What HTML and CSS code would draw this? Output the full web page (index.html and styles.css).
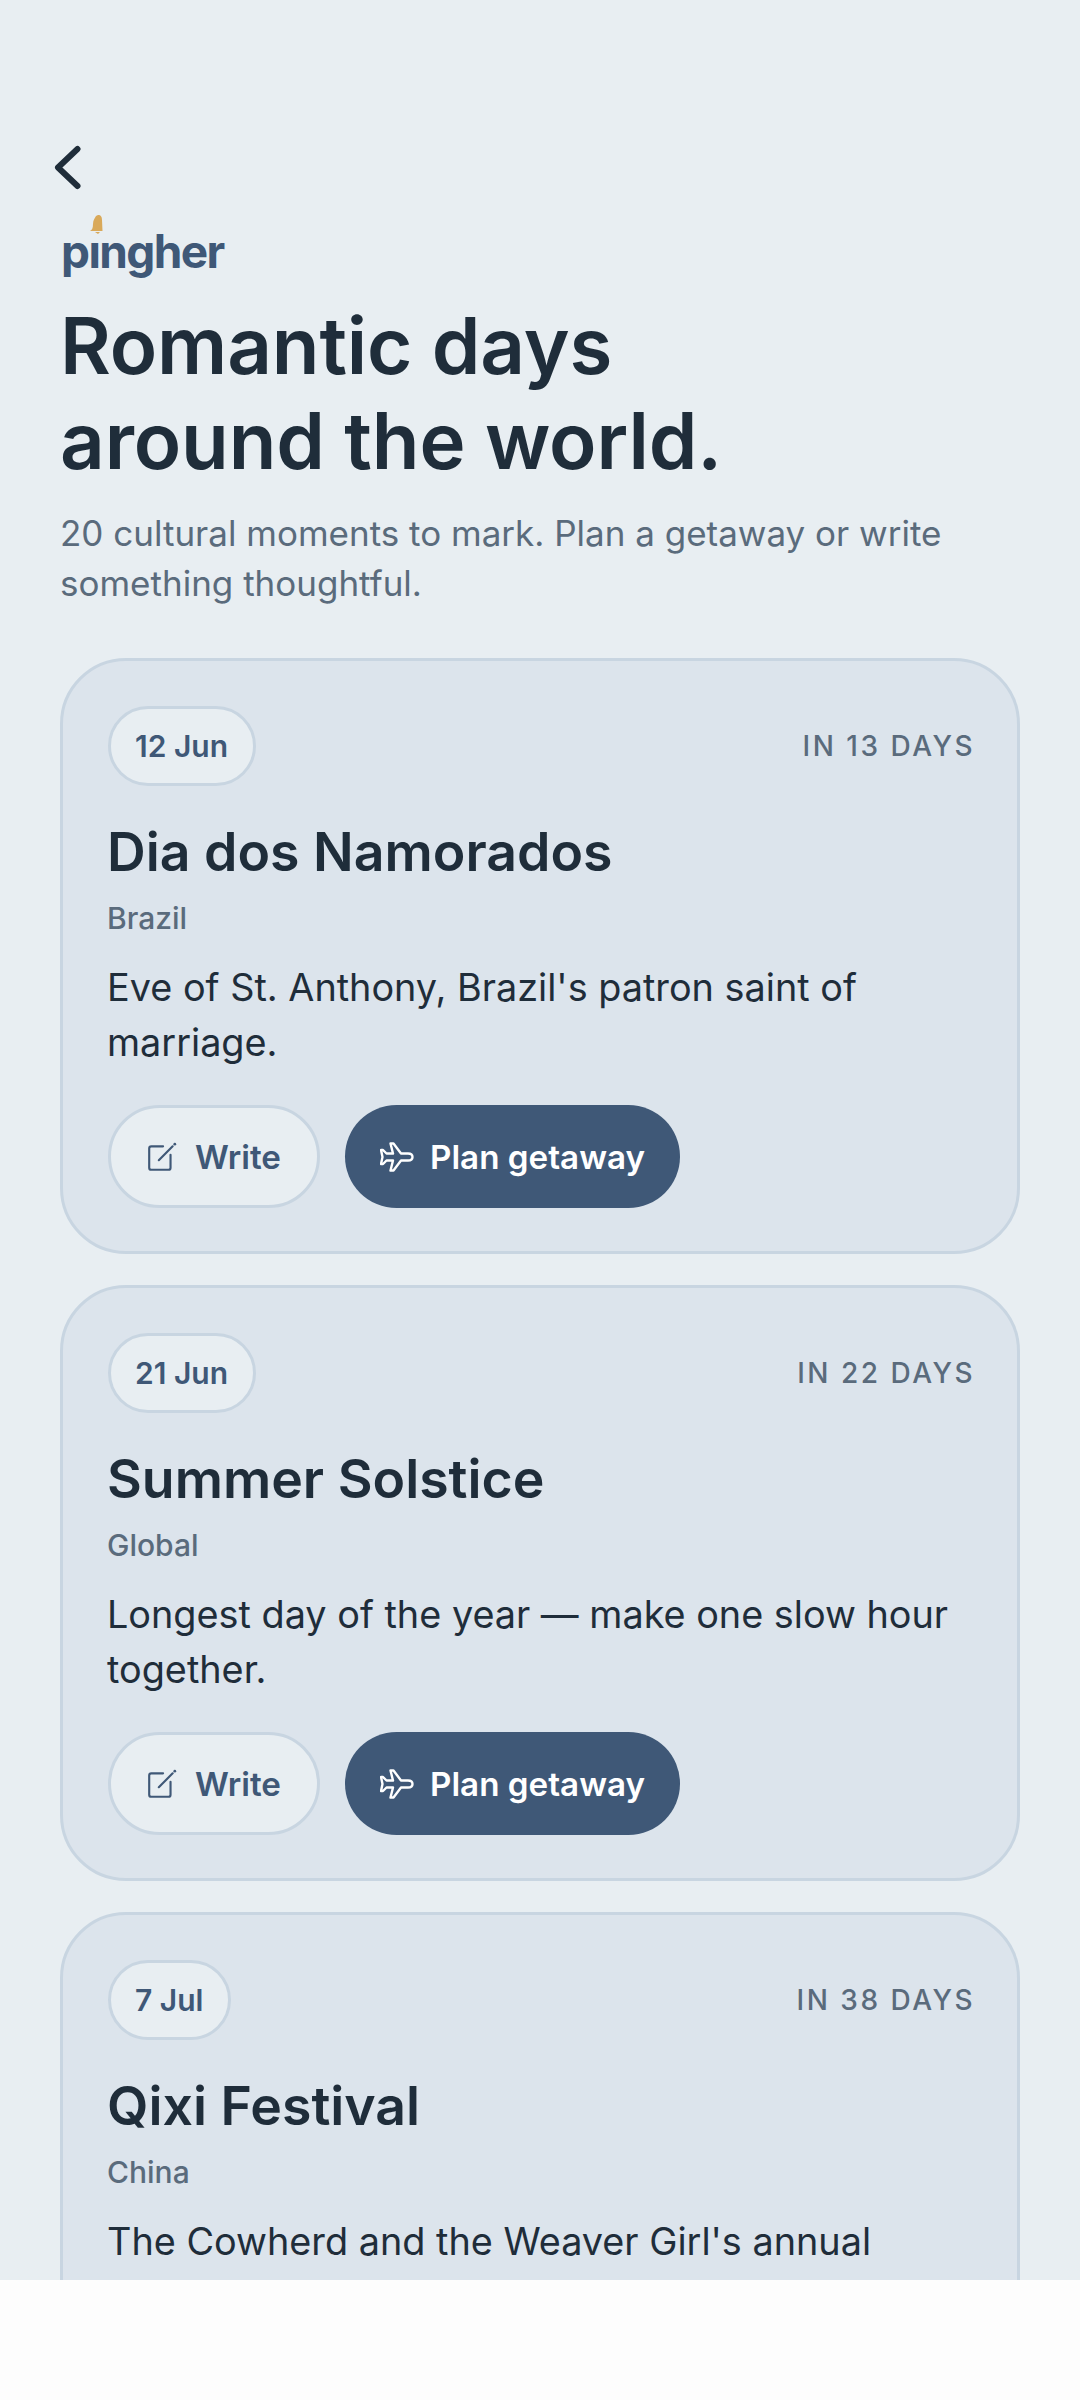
FILE: index.html
```html
<!DOCTYPE html>
<html lang="en">
    <head>
        <meta charset="utf-8">
        <title>Romantic days around the world</title>
        <link rel="stylesheet" href="styles.css">
    </head>
    <body>
        <div class="screen">
            <a class="back">
                <svg width="30" height="46" viewBox="0 0 30 46"><path d="M24.500 5 L5 23.500 L24.500 42" fill="none" stroke="#1f2d3a" stroke-width="6" stroke-linecap="round" stroke-linejoin="round"/></svg>
            </a>
            <div class="logo">
                <span class="logo-text">pingher</span>
                <span class="logo-mask"></span>
                <svg class="logo-bell" width="14" height="20" viewBox="0 0 14 20"><path d="M8 0 C11 0 12 2 12 5 L12.500 16 L0 16 C2 15 3 13 3 9 C3 5 5 3 6 1 Z M5 17 H10 L8 19 Z" fill="#d9a95a"/></svg>
            </div>
            <h1 class="title">Romantic days<br>around the world.</h1>
            <p class="subtitle">20 cultural moments to mark. Plan a getaway or write something thoughtful.</p>

            <div class="card">
                <div class="card-top">
                    <span class="pill">12 Jun</span>
                    <span class="days">IN 13 DAYS</span>
                </div>
                <h2 class="name">Dia dos Namorados</h2>
                <div class="country">Brazil</div>
                <p class="desc">Eve of St. Anthony, Brazil's patron saint of marriage.</p>
                <div class="actions">
                    <a class="btn btn-write">
                        <svg width="30" height="32" viewBox="0 0 28 30"><path d="M15 5 H4 Q2 5 2 7 V25 Q2 27 4 27 H20 Q22 27 22 25 V13 M11 18 L24 5" fill="none" stroke="#3f5877" stroke-width="2" stroke-linecap="round"/><circle cx="26" cy="3" r="1.300" fill="#3f5877"/></svg>
                        Write
                    </a>
                    <a class="btn btn-plan">
                        <svg width="34" height="30" viewBox="0 0 34 30"><path d="M32.500 15 Q32.500 11.500 28 11.500 H21 L13.500 1.500 H10.500 L13 11.500 H6.500 L3 8 H1 L2.500 15 L1 22 H3 L6.500 18.500 H13 L10.500 28.500 H13.500 L21 18.500 H28 Q32.500 18.500 32.500 15 Z" fill="none" stroke="#fff" stroke-width="2.400" stroke-linejoin="round"/></svg>
                        Plan getaway
                    </a>
                </div>
            </div>

            <div class="card">
                <div class="card-top">
                    <span class="pill">21 Jun</span>
                    <span class="days">IN 22 DAYS</span>
                </div>
                <h2 class="name">Summer Solstice</h2>
                <div class="country">Global</div>
                <p class="desc">Longest day of the year — make one slow hour together.</p>
                <div class="actions">
                    <a class="btn btn-write">
                        <svg width="30" height="32" viewBox="0 0 28 30"><path d="M15 5 H4 Q2 5 2 7 V25 Q2 27 4 27 H20 Q22 27 22 25 V13 M11 18 L24 5" fill="none" stroke="#3f5877" stroke-width="2" stroke-linecap="round"/><circle cx="26" cy="3" r="1.300" fill="#3f5877"/></svg>
                        Write
                    </a>
                    <a class="btn btn-plan">
                        <svg width="34" height="30" viewBox="0 0 34 30"><path d="M32.500 15 Q32.500 11.500 28 11.500 H21 L13.500 1.500 H10.500 L13 11.500 H6.500 L3 8 H1 L2.500 15 L1 22 H3 L6.500 18.500 H13 L10.500 28.500 H13.500 L21 18.500 H28 Q32.500 18.500 32.500 15 Z" fill="none" stroke="#fff" stroke-width="2.400" stroke-linejoin="round"/></svg>
                        Plan getaway
                    </a>
                </div>
            </div>

            <div class="card">
                <div class="card-top">
                    <span class="pill">7 Jul</span>
                    <span class="days">IN 38 DAYS</span>
                </div>
                <h2 class="name">Qixi Festival</h2>
                <div class="country">China</div>
                <p class="desc">The Cowherd and the Weaver Girl's annual</p>
            </div>
        </div>
    </body>
</html>
```

FILE: styles.css
```css
* {
    box-sizing: border-box;
}

html, body {
    margin: 0;
    background-color: #fdfdfd;
}

body {
    font-family: Inter, "Noto Sans", sans-serif;
    color: #1f2d3a;
}

.screen {
    height: 2280px;
    overflow: hidden;
    background-color: #e8eef2;
    padding: 144px 60px 0;
}

.back {
    display: block;
    height: 46px;
    margin-left: -7px;
}

.logo {
    position: relative;
    height: 78px;
    margin-top: 22px;
    padding-left: 1px;
}

.logo-text {
    display: block;
    font-weight: 700;
    font-size: 46px;
    line-height: 78px;
    color: #3f5877;
    letter-spacing: -1.600px;
}

/* hides the dot of the i, the bell sits there instead */
.logo-mask {
    position: absolute;
    left: 21px;
    top: 12px;
    width: 20px;
    height: 17px;
    background-color: #e8eef2;
}

.logo-bell {
    position: absolute;
    left: 30px;
    top: 3px;
}

.title {
    margin: 8px 0 0;
    font-size: 78px;
    line-height: 95px;
    font-weight: 600;
    letter-spacing: -0.150px;
}

.subtitle {
    margin: 20px 0 50px;
    font-size: 35px;
    line-height: 50px;
    color: #5a6b7c;
}

.card {
    height: 596px;
    margin-top: 31px;
    padding: 45px 42px 0 44px;
    background-color: #dce4ec;
    border: 3px solid #c8d5e1;
    border-radius: 66px;
}

.card-top {
    display: flex;
    justify-content: space-between;
    align-items: center;
    padding-left: 1px;
}

.pill {
    height: 80px;
    padding: 0 25px 0 24px;
    display: flex;
    align-items: center;
    background-color: #e8eef2;
    border: 3px solid #c8d5e1;
    border-radius: 40px;
    font-size: 30px;
    font-weight: 600;
    color: #3f5877;
}

.days {
    font-size: 28px;
    letter-spacing: 2.500px;
    font-weight: 500;
    color: #5a6b7c;
}

.name {
    margin: 30px 0 0;
    font-size: 53.600px;
    line-height: 72px;
    font-weight: 600;
}

.country {
    margin-top: 9px;
    font-size: 30px;
    line-height: 42px;
    font-weight: 500;
    color: #5a6b7c;
}

.desc {
    margin: 21px 0 0;
    font-size: 37.800px;
    line-height: 55px;
}

.actions {
    display: flex;
    gap: 25px;
    margin-top: 35px;
    padding-left: 1px;
}

.btn {
    height: 103px;
    display: flex;
    align-items: center;
    border-radius: 52px;
    font-size: 33.200px;
    font-weight: 600;
}

.btn-write {
    width: 212px;
    gap: 18px;
    padding-left: 36px;
    background-color: #e8eef2;
    border: 3px solid #c8d5e1;
    color: #3f5877;
}

.btn-plan {
    width: 335px;
    gap: 16px;
    padding-left: 35px;
    background-color: #3f5877;
    color: #fff;
}
```
